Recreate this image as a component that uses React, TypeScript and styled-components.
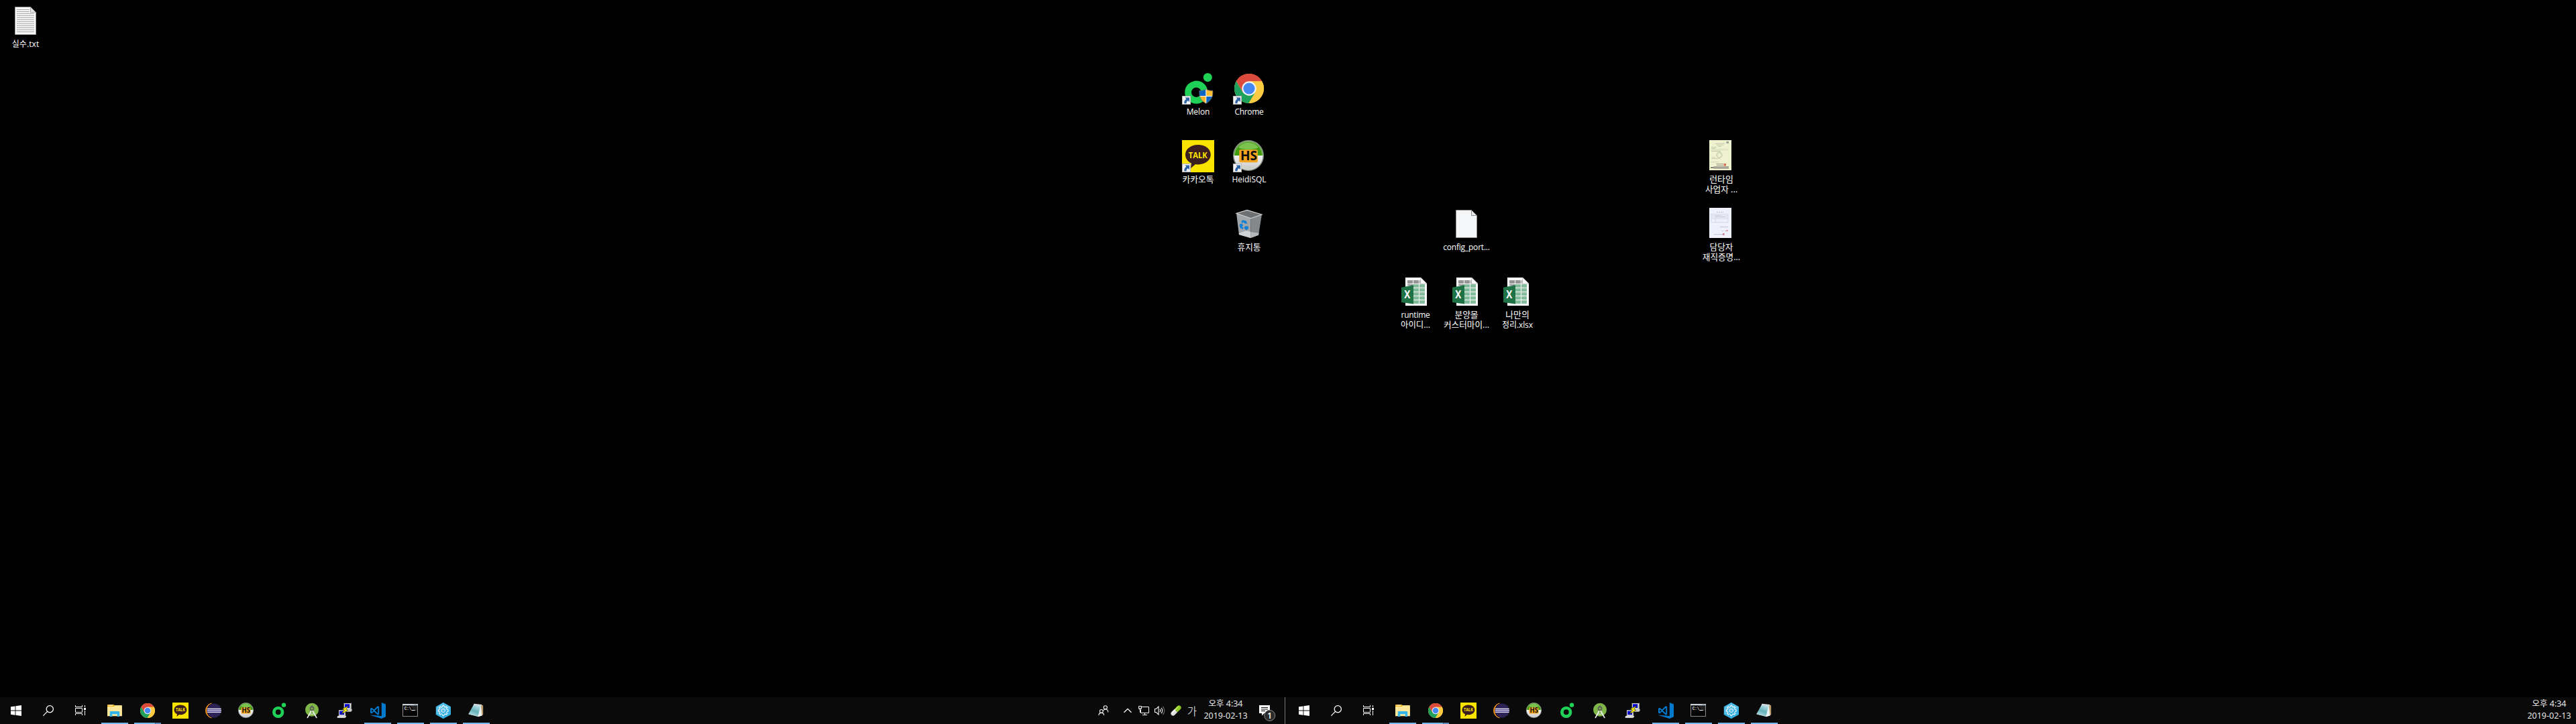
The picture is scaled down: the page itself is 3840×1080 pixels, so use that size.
import React from "react";
import styled, { createGlobalStyle } from "styled-components";

const GlobalStyle = createGlobalStyle`
  html, body { margin: 0; padding: 0; background: #000; }
  svg { display: block; overflow: visible; }
`;

const fontStack = `"Open Sans", "Noto Sans CJK KR", sans-serif`;

const Screen = styled.div`
  width: 3840px;
  height: 1080px;
  display: flex;
  flex-direction: column;
  background: #000;
  overflow: hidden;
  color: #fff;
  font-family: ${fontStack};
  font-size: 12px;
`;

const Desktop = styled.main`
  position: relative;
  flex: 1;
`;

const Shortcut = styled.div<{ $x: number; $y: number }>`
  position: absolute;
  left: ${(p) => p.$x}px;
  top: ${(p) => p.$y}px;
  width: 76px;
  display: flex;
  flex-direction: column;
  align-items: center;
`;

const IconBox = styled.div`
  width: 48px;
  height: 48px;
`;

const Label = styled.div`
  display: flex;
  flex-direction: column;
  align-items: center;
  margin-top: 3px;
`;

const LabelLine = styled.span<{ $size: number; $spacing: number }>`
  line-height: 15px;
  height: 15px;
  white-space: nowrap;
  font-size: ${(p) => p.$size}px;
  letter-spacing: ${(p) => p.$spacing}px;
`;

const Taskbars = styled.footer`
  display: flex;
  height: 40px;
`;

const Taskbar = styled.div`
  width: 1920px;
  height: 40px;
  display: flex;
  background: #0a0a0a;
`;

const SystemButton = styled.div`
  width: 48px;
  display: flex;
  align-items: center;
  justify-content: center;
`;

const Apps = styled.div`
  display: flex;
  gap: 1px;
  margin-left: 3px;
  flex: 1;
`;

const AppButton = styled.div`
  width: 48px;
  height: 40px;
  box-sizing: border-box;
  padding-top: 8px;
  display: flex;
  flex-direction: column;
  align-items: center;
  justify-content: space-between;
`;

const Underline = styled.div`
  display: flex;
  gap: 1px;
  width: 40px;
  height: 2px;
  background: #3f6285;
`;

const UnderlinePart = styled.div<{ $stacked?: boolean }>`
  flex: ${(p) => (p.$stacked ? "0 0 8px" : "1")};
  background: ${(p) => (p.$stacked ? "#5a8dbd" : "#76b9ed")};
`;

const TrayCell = styled.div<{ $width: number; $gap?: number }>`
  width: ${(p) => p.$width}px;
  margin-right: ${(p) => p.$gap ?? 0}px;
  display: flex;
  align-items: center;
  justify-content: center;
`;

const Ime = styled.span`
  font-family: "Noto Sans CJK KR", sans-serif;
  font-weight: 300;
  font-size: 15.5px;
  line-height: 20px;
`;

const Clock = styled.div`
  width: 72px;
  padding-top: 1px;
  display: flex;
  flex-direction: column;
  align-items: center;
`;

const ClockLine = styled.span`
  height: 18px;
  line-height: 18px;
  white-space: nowrap;
  font-size: 12.5px;
  color: #f2f2f2;
`;

const ShowDesktop = styled.div<{ $line?: boolean }>`
  width: ${(p) => (p.$line ? 4 : 3)}px;
  border-left: 1px solid ${(p) => (p.$line ? "#777" : "transparent")};
`;

/* ---------- desktop and application icons ---------- */

const Arrow = () => (
  <g>
    <rect x="0.5" y="35.5" width="12" height="12" fill="#f3f3f3" stroke="#b9b9b9" />
    <path d="M4.5 37.5H11V44L8.9 42C7 43.2 6.4 44.4 6.6 46.3H3.4C2.9 43.5 4 41.4 6.4 39.6Z" fill="#2f63a3" />
  </g>
);

const TxtIcon = () => (
  <svg width="48" height="48" viewBox="0 0 48 48">
    <path d="M8.5 3.5H31.5L39.5 11.5V44.5H8.5Z" fill="#f8f8f8" stroke="#999" />
    <path d="M31.5 3.5V11.5H39.5Z" fill="#e3e3e3" stroke="#aaa" />
    {[7, 10, 13, 16, 19, 22, 25, 28, 31, 34, 37, 40].map((y) => (
      <rect key={y} x="11" y={y} width={y < 12 ? 19 : 26} height="1" fill="#a5a5a5" />
    ))}
  </svg>
);

const BlankIcon = () => (
  <svg width="48" height="48" viewBox="0 0 48 48">
    <path d="M8.5 3.5H31.5L39.5 11.5V44.5H8.5Z" fill="#f5f6f7" stroke="#8e8e8e" />
    <path d="M31.5 3.5V11.5H39.5Z" fill="#e6e8ea" stroke="#8e8e8e" />
  </svg>
);

const MelonIcon = () => (
  <svg width="48" height="48" viewBox="0 0 48 48">
    <circle cx="21.3" cy="29.7" r="12.2" fill="none" stroke="#1fd157" strokeWidth="9.8" />
    <circle cx="38.3" cy="7.4" r="6.5" fill="#1fd157" />
    <clipPath id="shield">
      <path d="M35.8 24.9C38.6 26.8 42 27.3 45.8 27.2C46.5 36 43.5 42.3 35.8 46.2C28.2 42.3 25.3 36 25.9 27.2C29.6 27.3 33 26.8 35.8 24.9Z" />
    </clipPath>
    <g clipPath="url(#shield)">
      <rect x="25" y="24" width="11" height="11.5" fill="#0b66c3" />
      <rect x="36" y="24" width="11" height="11.5" fill="#fdbf35" />
      <rect x="25" y="35.5" width="11" height="12" fill="#fdb62a" />
      <rect x="36" y="35.5" width="11" height="12" fill="#0b66c3" />
      <path d="M25 35.5H47M35.8 24V47" stroke="#fff" strokeWidth="1" />
    </g>
    <path d="M35.8 24.9C38.6 26.8 42 27.3 45.8 27.2C46.5 36 43.5 42.3 35.8 46.2C28.2 42.3 25.3 36 25.9 27.2C29.6 27.3 33 26.8 35.8 24.9Z" fill="none" stroke="#6d6d6d" strokeWidth="0.8" />
    <Arrow />
  </svg>
);

const ChromeDisc = () => (
  <g>
    <circle cx="24" cy="24" r="22" fill="#fdcb42" />
    <path d="M24 24L33.5 29.5L23.5 46A22 22 0 0 1 4.95 13L14.5 29.5Z" fill="#1fa15d" />
    <path d="M24 13.3H43.2A22 22 0 0 0 4.95 13L14.7 29.4L24 24Z" fill="#dc4a3e" />
    <path d="M24 13.3H43.2A22 22 0 0 1 23.5 46L33.3 29.4L24 24Z" fill="#fdcb42" />
    <circle cx="24" cy="24" r="10.7" fill="#f1f3f4" />
    <circle cx="24" cy="24" r="8.6" fill="#4688f1" />
  </g>
);

const ChromeIcon = () => (
  <svg width="48" height="48" viewBox="0 0 48 48">
    <ChromeDisc />
    <Arrow />
  </svg>
);

const TalkFace = () => (
  <g>
    <rect width="48" height="48" fill="#fbe300" />
    <path d="M23.8 7C34.4 7 42.8 13 42.8 21.8C42.8 30.3 34.4 36.4 23.8 36.4C22.4 36.4 21.2 36.3 20 36.1L13 41.9L14 34.6C8.4 32 5 27.4 5 21.8C5 13 13.3 7 23.8 7Z" fill="#3b1e1e" />
    <text x="23.8" y="26.6" textAnchor="middle" textLength="28" lengthAdjust="spacingAndGlyphs" fontFamily="Open Sans, sans-serif" fontWeight="700" fontSize="12.5" fill="#fbe300">TALK</text>
  </g>
);

const TalkIcon = () => (
  <svg width="48" height="48" viewBox="0 0 48 48">
    <TalkFace />
    <Arrow />
  </svg>
);

const HeidiDisc = ({ id }: { id: string }) => (
  <g>
    <defs>
      <linearGradient id={id} x1="0" y1="0" x2="0" y2="1">
        <stop offset="0" stopColor="#4a9d22" />
        <stop offset="0.49" stopColor="#3d9a08" />
        <stop offset="0.5" stopColor="#f2f2f2" />
        <stop offset="1" stopColor="#c4c6c4" />
      </linearGradient>
    </defs>
    <circle cx="23" cy="23" r="22.2" fill={`url(#${id})`} stroke="#8a938a" strokeWidth="1.6" />
    <path d="M8 11A19 19 0 0 1 38 11C31 15 15 15 8 11Z" fill="#7cc24f" />
    <circle cx="23" cy="23" r="20.7" fill="none" stroke="#ffffff" strokeOpacity="0.35" strokeWidth="1" />
    <rect x="9.3" y="14.2" width="27.6" height="19" rx="2" fill="#f3a51f" />
    <text x="23.5" y="30.4" textAnchor="middle" textLength="25" lengthAdjust="spacingAndGlyphs" fontFamily="Open Sans, sans-serif" fontWeight="700" fontSize="20" fill="#0c0c0c">HS</text>
  </g>
);

const HeidiIcon = () => (
  <svg width="48" height="48" viewBox="0 0 48 48">
    <HeidiDisc id="heidi-desktop" />
    <Arrow />
  </svg>
);

const BinIcon = () => (
  <svg width="48" height="48" viewBox="0 0 48 48">
    <path d="M5 8.3L21 3.2L43 10L26.7 15.7Z" fill="#6f7072" />
    <path d="M5 8.3L26.7 15.7L26.3 45L9 40Z" fill="#a3a6a9" />
    <path d="M43 10L26.7 15.7L26.3 45L38 40.7Z" fill="#85888b" />
    <path d="M8.6 38L20 34L26.4 36L26.3 45L9 40Z" fill="#cfd1d2" />
    <path d="M26.4 36L38.6 37.5L38 40.7L26.3 45Z" fill="#b4b7b9" />
    <path d="M5 8.3L21 3.4L43 10L26.7 15.7Z" fill="none" stroke="#d3d5d6" strokeWidth="1.1" />
    <path d="M12.2 20.5L14.5 18.2L19.5 19.5L21.4 23.5L17.5 23.6L16 21.4L13.6 22.7Z" fill="#1180d6" />
    <path d="M10 24.2L13.8 23.4L15 26.8L13.5 28.2L15.5 29.8L15 32L11.2 30.5L9.6 27Z" fill="#1180d6" />
    <path d="M16.2 29.7L19 27L22.8 27.8L22.9 31L20 33.4L18.4 32.2Z" fill="#1180d6" />
  </svg>
);

const ExcelIcon = () => (
  <svg width="48" height="48" viewBox="0 0 48 48">
    <path d="M9 3H32L41 12V45H9Z" fill="#fff" />
    <path d="M12 7H20V12H12ZM21 7H29V12H21ZM30 7H31.5V12H30ZM12 13H20V15H12Z" fill="#969696" />
    <path d="M31.7 3V12.3H41Z" fill="#fff" stroke="#aaa" strokeWidth="0.7" />
    {[13, 19, 25, 31, 37].map((y) => (
      <path key={y} d={`M20 ${y}H29V${y + 5}H20ZM30 ${y}H38V${y + 5}H30Z`} fill="#84bd9c" />
    ))}
    <path d="M3 17.8L21 14.3V42.6L3 40Z" fill="#1e7245" />
    <text x="11.8" y="34" textAnchor="middle" textLength="9" lengthAdjust="spacingAndGlyphs" fontFamily="Open Sans, sans-serif" fontWeight="700" fontSize="15.5" fill="#fff">X</text>
  </svg>
);

const LicenseThumb = () => (
  <svg width="48" height="48" viewBox="0 0 48 48">
    <rect x="6" y="0" width="33" height="45" fill="#eff2cf" />
    <rect x="31.5" y="2" width="3.5" height="3" fill="#98a08e" />
    <path d="M15 5.2H29M17 7.3H27M19 9.4H24M9 10.5H17M9 12.5H15M9 16.5H23" stroke="#c3c7aa" strokeWidth="1" />
    <path d="M10 13.5H34M8 15H35" stroke="#d9dcc0" strokeWidth="0.8" />
    <circle cx="21" cy="22.3" r="3.8" fill="none" stroke="#cdd2b4" strokeWidth="1.8" />
    <path d="M9 27.5H22M10 26H15M8 32.7H20" stroke="#c9ccb1" strokeWidth="0.9" />
    <path d="M16 35.5H27M17 37.5H27" stroke="#9d9b87" strokeWidth="0.9" />
    <rect x="27.5" y="35" width="3.5" height="3.4" fill="#d9705b" />
    <rect x="13" y="39" width="22" height="3.8" fill="#a7a594" />
    <rect x="8" y="40" width="5" height="2" fill="#88897d" />
  </svg>
);

const CertificateThumb = () => (
  <svg width="48" height="48" viewBox="0 0 48 48">
    <rect x="6" y="0" width="33" height="45" fill="#eef0fc" />
    <path d="M17 6.5H27" stroke="#b9bcc9" strokeWidth="1" strokeDasharray="2 1" />
    <rect x="9" y="9.5" width="25" height="12" fill="none" stroke="#d0d3e0" strokeWidth="0.8" />
    <path d="M9 11.8H34M9 14H34M9 16.2H34M15 9.5V21.5" stroke="#d0d3e0" strokeWidth="0.8" />
    <path d="M16 13.5H30M16 11.5H23" stroke="#bbbecd" strokeWidth="0.7" />
    <path d="M22 28.6H34M25 34.5H27M29 34.5H31M13 39.5H28" stroke="#bcbfce" strokeWidth="0.9" />
    <rect x="31" y="33" width="3" height="2.2" fill="#dfa3af" />
    <rect x="26" y="38" width="2.6" height="2.8" fill="#cf7d8e" />
  </svg>
);

/* ---------- taskbar icons ---------- */

const ExplorerIcon = () => (
  <svg width="24" height="24" viewBox="0 0 24 24">
    <path d="M1 3H10.7L11.7 4.3H22V8H1Z" fill="#f0b92d" />
    <path d="M1 6H11L12 4.3H22.9V20.3H1Z" fill="#ffe79a" />
    <path d="M3 4.1H9" stroke="#fff" strokeWidth="0.9" />
    <path d="M4.8 13H19.2V21H15.7V17.2H8.3V21H4.8Z" fill="#35b6ea" />
  </svg>
);

const ChromeSmall = () => (
  <svg width="24" height="24" viewBox="0 0 48 48"><ChromeDisc /></svg>
);

const TalkSmall = () => (
  <svg width="24" height="24" viewBox="0 0 48 48"><TalkFace /></svg>
);

const EclipseIcon = () => (
  <svg width="24" height="24" viewBox="0 0 24 24">
    <path d="M9.5 1A11.2 11.2 0 0 0 9.5 23A11.8 11.8 0 0 1 9.5 1Z" fill="#f7941e" stroke="#f7941e" strokeWidth="0.7" />
    <circle cx="13.3" cy="12" r="10.6" fill="#2c2255" />
    <path d="M3.3 8.7H23.3L23.9 12L23.3 15.2H3.3L2.7 12Z" fill="#5c4f97" />
    <path d="M3 9.4H23.6M2.8 12H24M3 14.5H23.6" stroke="#eceaf4" strokeWidth="1.2" />
  </svg>
);

const HeidiSmall = ({ id }: { id: string }) => (
  <svg width="24" height="24" viewBox="0 0 48 48"><HeidiDisc id={id} /></svg>
);

const MelonSmall = () => (
  <svg width="24" height="24" viewBox="0 0 24 24">
    <circle cx="10.7" cy="14.3" r="6.3" fill="none" stroke="#1fd157" strokeWidth="4.7" />
    <circle cx="19" cy="3.7" r="3.2" fill="#1fd157" />
  </svg>
);

const StudioIcon = () => (
  <svg width="24" height="24" viewBox="0 0 24 24">
    <circle cx="12" cy="10.8" r="10" fill="#80b548" />
    <circle cx="12" cy="8.9" r="2.5" fill="none" stroke="#5a6259" strokeWidth="1.9" />
    <path d="M11 4.4H13V7.4H11Z" fill="#5a6259" />
    <path d="M10.6 13L5.4 22.4M13.4 13L18.8 22.4" stroke="#f2f2f2" strokeWidth="1.7" strokeLinecap="round" />
    <path d="M7.8 16.2C10 17.8 14 17.8 16.2 16.2" fill="none" stroke="#e6e6e6" strokeWidth="1" />
  </svg>
);

const PuttyIcon = () => (
  <svg width="24" height="24" viewBox="0 0 24 24">
    <path d="M10.7 1H20.5L21.7 0.5V9L20.5 10H10.7Z" fill="#cfcfcf" />
    <rect x="12" y="2.3" width="7.2" height="5.7" fill="#0000d8" />
    <path d="M12 11L14 9.6H22.7V12L21 13.7H12Z" fill="#c9c9c9" />
    <path d="M3 11.3H12L13 10.8V19L12 20H3Z" fill="#cfcfcf" />
    <rect x="4.2" y="12.7" width="6.8" height="5.4" fill="#0000d8" />
    <path d="M0.7 20.7L3 19.6H14V21.3L12.3 23H0.7Z" fill="#c9c9c9" />
    <path d="M1 21H12" stroke="#fff" strokeWidth="0.8" />
    <path d="M18 4.5L8.3 9.7L11.3 11.3L6.7 17.2L17 11.5L13.7 9.8Z" fill="#fff200" stroke="#1c1c00" strokeWidth="0.6" />
  </svg>
);

const CodeIcon = () => (
  <svg width="24" height="24" viewBox="0 0 24 24">
    <path d="M17.8 0L24 2.6V21.3L17.8 24L0 18.5L17.8 20Z" fill="#0078cc" />
    <path d="M2 9.4V14.8L3 15.4L12.2 6.2L13.2 6.8V17L12.3 17.6L3 8.8Z" fill="none" stroke="#0078cc" strokeWidth="2" strokeLinejoin="round" />
  </svg>
);

const ConsoleIcon = () => (
  <svg width="24" height="24" viewBox="0 0 24 24">
    <rect x="0.5" y="2.5" width="22" height="18" fill="#050505" stroke="#8b8b8b" />
    <path d="M12 4H22V13C17 12 14 9 12 4Z" fill="#222" />
    <rect x="0" y="2" width="23" height="2.3" fill="#ccd2da" />
    <path d="M17 3.1H22" stroke="#58708d" strokeWidth="0.9" strokeDasharray="1.2 0.6" />
    <text x="2.7" y="11" textLength="10.5" lengthAdjust="spacingAndGlyphs" fontFamily="Liberation Mono, monospace" fontWeight="700" fontSize="7" fill="#e4e4e4">C:\</text>
    <path d="M13.3 11.5H18.7" stroke="#eee" strokeWidth="1" />
  </svg>
);

const teeth = [0, 45, 90, 135, 180, 225, 270, 315];

const GearIcon = () => (
  <svg width="24" height="24" viewBox="0 0 24 24">
    <path d="M11.8 0.8L22.2 6.6V17.6L11.8 23.3L1.6 17.6V6.6Z" fill="#36b1e2" stroke="#36b1e2" strokeWidth="1.6" strokeLinejoin="round" />
    <path d="M1.6 6.6L11.8 0.8L22.2 6.6L22.2 9L1.2 17.4Z" fill="#59c0ea" />
    <g transform="translate(11.8 12)" fill="none" stroke="#fff" strokeWidth="1">
      {teeth.map((a) => (
        <path key={a} transform={`rotate(${a})`} d="M-2.2 -5.3L-1.2 -5.7V-7.4H1.2V-5.7L2.2 -5.3" />
      ))}
      <circle r="2.6" />
    </g>
  </svg>
);

const NotepadIcon = ({ id }: { id: string }) => (
  <svg width="24" height="24" viewBox="0 0 24 24">
    <defs>
      <linearGradient id={id} x1="0.7" y1="0" x2="0.3" y2="1">
        <stop offset="0" stopColor="#c5e6ea" />
        <stop offset="0.55" stopColor="#65b1bd" />
        <stop offset="1" stopColor="#b4dde2" />
      </linearGradient>
    </defs>
    <path d="M19 3.5L22.2 4.2V18.3L15.3 21Z" fill="#b99a6a" />
    <path d="M18.7 3L20.6 19.5L15 21.2L12 19Z" fill="#eef1f2" />
    <path d="M8.3 2.8L18.8 4L14.4 20.6L0.4 17Z" fill={`url(#${id})`} />
    <path d="M8.6 1.7L20.5 3L19.9 4.6L7.8 3.7Z" fill="#d9dadb" />
    <path d="M0.4 17L14.4 20.6" stroke="#dceff1" strokeWidth="0.8" />
  </svg>
);

/* ---------- system icons ---------- */

const StartIcon = () => (
  <svg width="16" height="16" viewBox="0 0 16 16">
    <path d="M0 2.3L6.5 1.4V7.6H0ZM7.4 1.2L16 0V7.6H7.4ZM0 8.5H6.5V14.7L0 13.8ZM7.4 8.5H16V16L7.4 14.8Z" fill="#fff" />
  </svg>
);

const SearchIcon = () => (
  <svg width="16" height="16" viewBox="0 0 16 16" fill="none" stroke="#fff" strokeWidth="1.3">
    <circle cx="10.3" cy="5.7" r="5.1" />
    <path d="M6.6 9.4L0.4 15.6" />
  </svg>
);

const TaskViewIcon = () => (
  <svg width="16" height="16" viewBox="0 0 16 16" fill="none" stroke="#fff">
    <path d="M0.5 0V2.5H10.5V0M0.5 15V12.5H10.5V15M0.5 4.5H10.5V10.5H0.5ZM14.5 0V3M14.5 8V15" />
    <rect x="13" y="4" width="3" height="3" fill="#fff" stroke="none" />
  </svg>
);

const PeopleIcon = () => (
  <svg width="16" height="16" viewBox="0 0 16 16" fill="none" stroke="#f2f2f2" strokeWidth="1.1">
    <circle cx="10.8" cy="3.3" r="2.6" />
    <path d="M7.6 8.3C8.3 6.8 9.4 6 10.8 6C13.3 6 14.8 7.8 14.8 10.6" />
    <circle cx="4.8" cy="8.9" r="2.4" />
    <path d="M0.9 15C0.9 12.8 2.5 11.4 4.8 11.4C7.1 11.4 8.6 12.8 8.6 15" />
  </svg>
);

const ChevronIcon = () => (
  <svg width="12" height="8" viewBox="0 0 12 8" fill="none" stroke="#fff" strokeWidth="1.3">
    <path d="M0.5 6.8L6 1.3L11.5 6.8" />
  </svg>
);

const NetworkIcon = () => (
  <svg width="16" height="14" viewBox="0 0 16 14" fill="none" stroke="#f5f5f5">
    <path d="M5 1.5H15.5V10.5H3.5V6M9.5 10.5V13M6 13.5H13" />
    <path d="M0.5 0.5H4.5V3.5H0.5ZM0.5 3.5L1.5 5.5H3.5L4.5 3.5M2.5 5.5V10" />
  </svg>
);

const VolumeIcon = () => (
  <svg width="16" height="14" viewBox="0 0 16 14" fill="none" stroke="#f5f5f5" strokeWidth="1.1">
    <path d="M0.5 4.5H2.5L6 1V13L2.5 9.5H0.5Z" />
    <path d="M8 4.8C9.1 6 9.1 8 8 9.2M10 2.8C12.2 5 12.2 9 10 11.2" />
    <path d="M12.3 0.8C15.6 4 15.6 10 12.3 13.2" stroke="#777" />
  </svg>
);

const PillIcon = () => (
  <svg width="16" height="16" viewBox="0 0 16 16">
    <g transform="rotate(-45 8 8)">
      <path d="M8 4.8H1.8A3.2 3.2 0 0 0 1.8 11.2H8Z" fill="#e1e1df" />
      <path d="M8 4.8H14.2A3.2 3.2 0 0 1 14.2 11.2H8Z" fill="#8fc922" />
      <path d="M8 6.2H14" stroke="#c7ee6c" strokeWidth="1.3" strokeLinecap="round" />
      <path d="M2 6.2H8" stroke="#fff" strokeWidth="1.3" strokeLinecap="round" />
    </g>
  </svg>
);

const ActionIcon = () => (
  <svg width="20" height="16" viewBox="0 0 20 16">
    <path d="M0 0H16V12H7.5L4 15.5V12H0Z" fill="#fff" />
    <path d="M3 3.5H13M3 6H13M3 8.5H9" stroke="#0a0a0a" strokeWidth="1" />
    <circle cx="15.7" cy="15.3" r="8" fill="#2b2b2b" stroke="#8b8b8b" strokeWidth="1" />
    <text x="15.7" y="19.8" textAnchor="middle" fontFamily="Open Sans, sans-serif" fontSize="12.5" fontWeight="600" fill="#fff">1</text>
  </svg>
);

/* ---------- data ---------- */

type Line = { text: string; size?: number; spacing?: number };
const shortcuts: { x: number; y: number; icon: React.ReactNode; lines: Line[] }[] = [
  { x: 0, y: 7, icon: <TxtIcon />, lines: [{ text: "실수.txt", spacing: 0.1 }] },
  { x: 1748, y: 108, icon: <MelonIcon />, lines: [{ text: "Melon", spacing: -0.1 }] },
  { x: 1824, y: 108, icon: <ChromeIcon />, lines: [{ text: "Chrome", spacing: -0.35 }] },
  { x: 1748, y: 209, icon: <TalkIcon />, lines: [{ text: "카카오톡", size: 12.8 }] },
  { x: 1824, y: 209, icon: <HeidiIcon />, lines: [{ text: "HeidiSQL" }] },
  { x: 1824, y: 310, icon: <BinIcon />, lines: [{ text: "휴지통", size: 12.7 }] },
  { x: 2148, y: 310, icon: <BlankIcon />, lines: [{ text: "config_port...", spacing: -0.2 }] },
  { x: 2072, y: 411, icon: <ExcelIcon />, lines: [{ text: "runtime", spacing: -0.25 }, { text: "아이디...", size: 12.4 }] },
  { x: 2148, y: 411, icon: <ExcelIcon />, lines: [{ text: "분양몰", size: 12.7 }, { text: "커스터마이...", size: 12.65 }] },
  { x: 2224, y: 411, icon: <ExcelIcon />, lines: [{ text: "나만의", size: 12.9 }, { text: "정리.xlsx", spacing: -0.1 }] },
  { x: 2528, y: 209, icon: <LicenseThumb />, lines: [{ text: "런타임", size: 12.9 }, { text: "사업자 ...", size: 12.65 }] },
  { x: 2528, y: 310, icon: <CertificateThumb />, lines: [{ text: "담당자", size: 12.7 }, { text: "재직증명...", size: 12.6 }] },
];

const apps = (prefix: string): { icon: React.ReactNode; open?: boolean; stacked?: boolean }[] => [
  { icon: <ExplorerIcon />, open: true },
  { icon: <ChromeSmall />, open: true, stacked: true },
  { icon: <TalkSmall /> },
  { icon: <EclipseIcon /> },
  { icon: <HeidiSmall id={`${prefix}-heidi`} /> },
  { icon: <MelonSmall /> },
  { icon: <StudioIcon /> },
  { icon: <PuttyIcon /> },
  { icon: <CodeIcon />, open: true },
  { icon: <ConsoleIcon />, open: true },
  { icon: <GearIcon />, open: true },
  { icon: <NotepadIcon id={`${prefix}-notepad`} />, open: true },
];

const Launcher = ({ prefix }: { prefix: string }) => (
  <>
    <SystemButton><StartIcon /></SystemButton>
    <SystemButton><SearchIcon /></SystemButton>
    <SystemButton><TaskViewIcon /></SystemButton>
    <Apps>
      {apps(prefix).map((app, i) => (
        <AppButton key={i}>
          {app.icon}
          {app.open && (
            <Underline>
              <UnderlinePart />
              {app.stacked && <UnderlinePart $stacked />}
            </Underline>
          )}
        </AppButton>
      ))}
    </Apps>
  </>
);

const DateTime = () => (
  <Clock>
    <ClockLine>오후 4:34</ClockLine>
    <ClockLine>2019-02-13</ClockLine>
  </Clock>
);

export default function App() {
  return (
    <Screen>
      <GlobalStyle />
      <Desktop>
        {shortcuts.map((s, i) => (
          <Shortcut key={i} $x={s.x} $y={s.y}>
            <IconBox>{s.icon}</IconBox>
            <Label>
              {s.lines.map((line) => (
                <LabelLine key={line.text} $size={line.size ?? 12} $spacing={line.spacing ?? 0}>
                  {line.text}
                </LabelLine>
              ))}
            </Label>
          </Shortcut>
        ))}
      </Desktop>
      <Taskbars>
        <Taskbar>
          <Launcher prefix="left" />
          <TrayCell $width={24} $gap={12}><PeopleIcon /></TrayCell>
          <TrayCell $width={24}><ChevronIcon /></TrayCell>
          <TrayCell $width={24}><NetworkIcon /></TrayCell>
          <TrayCell $width={24}><VolumeIcon /></TrayCell>
          <TrayCell $width={24}><PillIcon /></TrayCell>
          <TrayCell $width={24} $gap={2}><Ime>가</Ime></TrayCell>
          <DateTime />
          <TrayCell $width={48} $gap={4}><ActionIcon /></TrayCell>
          <ShowDesktop $line />
        </Taskbar>
        <Taskbar>
          <Launcher prefix="right" />
          <DateTime />
          <ShowDesktop />
        </Taskbar>
      </Taskbars>
    </Screen>
  );
}
